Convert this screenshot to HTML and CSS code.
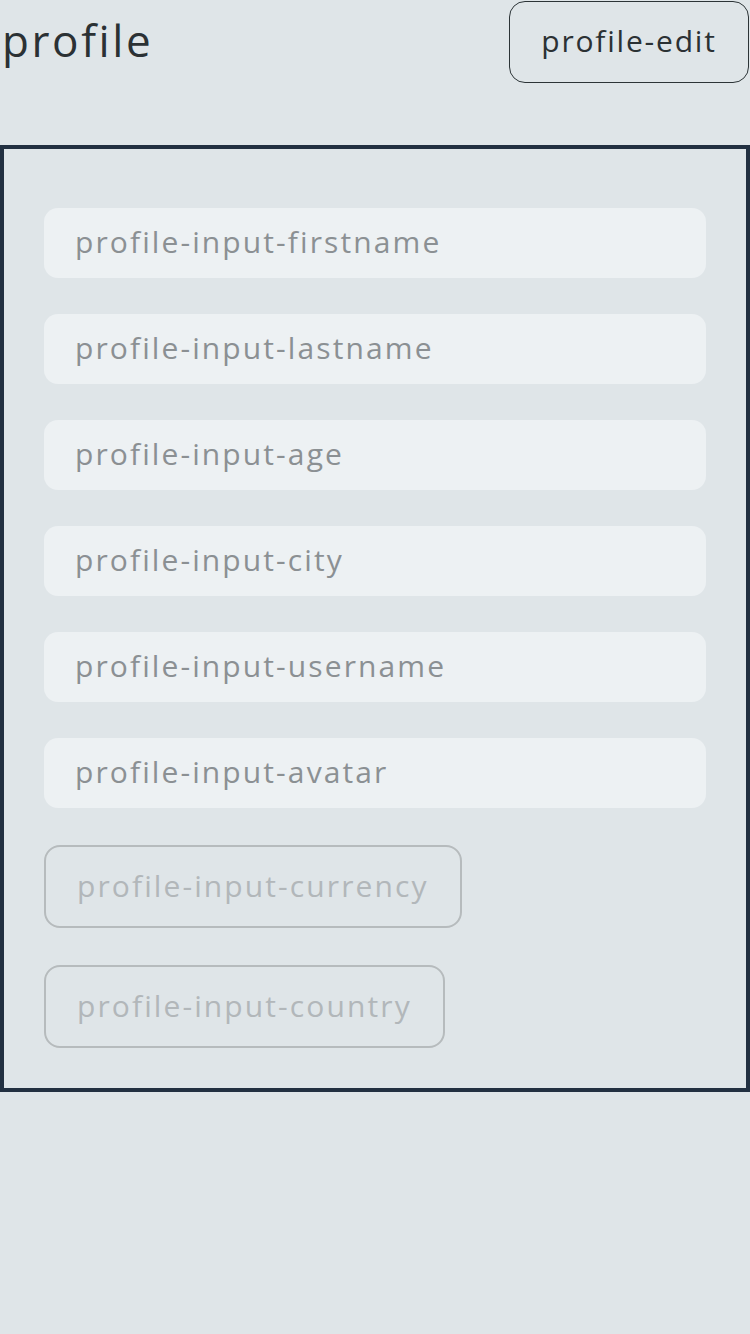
FILE: index.html
```html
<!DOCTYPE html>
<html>
<head>
<meta charset="utf-8">
<link rel="stylesheet" href="styles.css">
</head>
<body>
<header class="top">
  <h1 class="title">profile</h1>
  <button class="edit">profile-edit</button>
</header>
<main class="card">
  <input class="field" placeholder="profile-input-firstname">
  <input class="field" placeholder="profile-input-lastname">
  <input class="field" placeholder="profile-input-age">
  <input class="field" placeholder="profile-input-city">
  <input class="field" placeholder="profile-input-username">
  <input class="field" placeholder="profile-input-avatar">
  <div class="picker">profile-input-currency</div>
  <div class="picker">profile-input-country</div>
</main>
</body>
</html>
```
FILE: styles.css
```css
html, body {
  margin: 0;
  padding: 0;
  background: #dfe5e8;
  font-family: "Open Sans", "DejaVu Sans", sans-serif;
}
.top {
  display: flex;
  justify-content: space-between;
  align-items: flex-start;
  height: 84px;
}
.title {
  margin: 0;
  padding: 12px 0 0 2px;
  font-size: 44px;
  font-weight: 400;
  line-height: 56px;
  letter-spacing: 2.6px;
  color: #2b3134;
}
.edit {
  margin: 1px 1px 0 0;
  width: 240px;
  height: 82px;
  border: 1px solid #2c3437;
  border-radius: 16px;
  background: transparent;
  font-family: inherit;
  font-size: 30px;
  letter-spacing: 1.8px;
  color: #2b3134;
  padding: 0 0 4px;
}
.card {
  margin-top: 61px;
  border: 4px solid #223041;
  padding: 59px 40px 40px;
  display: flex;
  flex-direction: column;
  align-items: flex-start;
  gap: 36px;
}
.field {
  box-sizing: border-box;
  width: 100%;
  height: 70px;
  border: none;
  border-radius: 14px;
  background: #edf1f3;
  padding: 0 0 3px 31px;
  font-family: inherit;
  font-size: 30px;
  letter-spacing: 2.1px;
  color: #2b3134;
  outline: none;
}
.field::placeholder {
  color: #8b9093;
}
.picker {
  box-sizing: border-box;
  height: 83px;
  margin-top: 1px;
  border: 2px solid #b6bbbd;
  border-radius: 16px;
  padding: 0 31px 3px;
  display: flex;
  align-items: center;
  font-size: 30px;
  letter-spacing: 2.1px;
  color: #b2b7ba;
}
```
